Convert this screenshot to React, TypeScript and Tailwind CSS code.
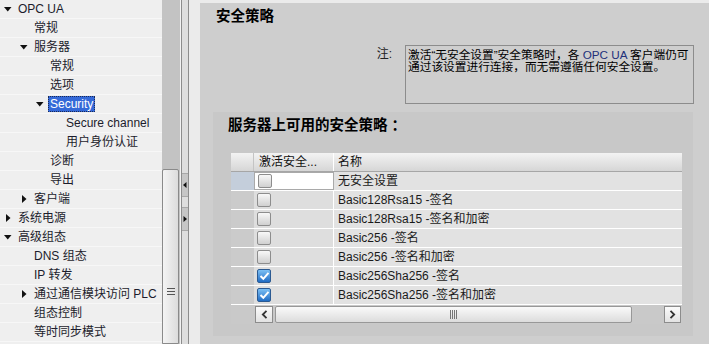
import React from "react";

type Item = { l: number; a?: "down" | "right"; t: string; sel?: boolean };

const items: Item[] = [
  { l: 0, a: "down", t: "OPC UA" },
  { l: 1, t: "常规" },
  { l: 1, a: "down", t: "服务器" },
  { l: 2, t: "常规" },
  { l: 2, t: "选项" },
  { l: 2, a: "down", t: "Security", sel: true },
  { l: 3, t: "Secure channel" },
  { l: 3, t: "用户身份认证" },
  { l: 2, t: "诊断" },
  { l: 2, t: "导出" },
  { l: 1, a: "right", t: "客户端" },
  { l: 0, a: "right", t: "系统电源" },
  { l: 0, a: "down", t: "高级组态" },
  { l: 1, t: "DNS 组态" },
  { l: 1, t: "IP 转发" },
  { l: 1, a: "right", t: "通过通信模块访问 PLC" },
  { l: 1, t: "组态控制" },
  { l: 1, t: "等时同步模式" },
];

const pad = ["pl-[4px]", "pl-[20px]", "pl-[36px]", "pl-[52px]"];

function Arrow({ a }: { a?: "down" | "right" }) {
  if (a === "down")
    return (
      <svg width="8" height="5" viewBox="0 0 8 5" className="block">
        <path d="M0 0 L7.5 0 L3.75 4.5 Z" fill="#111" />
      </svg>
    );
  if (a === "right")
    return (
      <svg width="5" height="8" viewBox="0 0 5 8" className="block ml-[2px]">
        <path d="M0 0 L4.5 4 L0 8 Z" fill="#111" />
      </svg>
    );
  return null;
}

function Tree() {
  return (
    <div className="w-[162px] h-full bg-[#efefef] flex flex-col">
      {items.map((it, i) => (
        <div
          key={i}
          className={`h-[19px] shrink-0 flex items-center border-b border-[#f7f7f7] ${pad[it.l]}`}
        >
          <div className="w-[14px] flex items-center">
            <Arrow a={it.a} />
          </div>
          {it.sel ? (
            <span className="ml-[-2px] px-[1px] h-[16px] leading-[14px] bg-[#3469d8] text-white border border-dotted border-[#1b2a55] whitespace-nowrap">
              {it.t}
            </span>
          ) : (
            <span className="whitespace-nowrap text-[#1c1c2c]">{it.t}</span>
          )}
        </div>
      ))}
    </div>
  );
}

function VScroll() {
  return (
    <div className="w-[18px] h-full flex flex-col bg-[#c3c3c3]">
      <div className="h-[169px] shrink-0" />
      <div className="flex-1 border border-[#8a8a8a] rounded-t-[2px] mr-[1px] bg-linear-to-r from-[#f4f4f4] to-[#dcdcdc] flex flex-col items-center">
        <div className="mt-[118px] flex flex-col gap-[2px]">
          <div className="w-[8px] h-[1px] bg-[#555]" />
          <div className="w-[8px] h-[1px] bg-[#555]" />
          <div className="w-[8px] h-[1px] bg-[#555]" />
        </div>
      </div>
    </div>
  );
}

function Splitter() {
  return (
    <div className="w-[9px] h-full flex bg-[#e9e9e9]">
      <div className="w-[1px] bg-[#f2f2f2]" />
      <div className="w-[1px] bg-[#8c8c8c]" />
      <div className="flex-1 bg-[#dedede] flex flex-col">
        <div className="h-[173px] shrink-0" />
        <div className="h-[24px] shrink-0 bg-[#c6c6c6] border-y border-[#a8a8a8] flex items-center justify-center">
          <svg width="4" height="6" viewBox="0 0 4 6">
            <path d="M3.5 0 L0 3 L3.5 6 Z" fill="#111" />
          </svg>
        </div>
        <div className="h-[10px] shrink-0" />
        <div className="h-[24px] shrink-0 bg-[#c6c6c6] border-y border-[#a8a8a8] flex items-center justify-center">
          <svg width="4" height="6" viewBox="0 0 4 6">
            <path d="M0.5 0 L4 3 L0.5 6 Z" fill="#111" />
          </svg>
        </div>
      </div>
      <div className="w-[1px] bg-[#8c8c8c]" />
    </div>
  );
}

function Checkbox({ checked }: { checked?: boolean }) {
  if (checked)
    return (
      <div className="w-[14px] h-[14px] rounded-[2px] border border-[#2b5a92] bg-linear-to-b from-[#7cc0f4] to-[#1f6cc4] flex items-center justify-center">
        <svg width="11" height="10" viewBox="0 0 11 10">
          <path d="M1.5 5 L4.3 7.8 L9.5 1.8" stroke="#fff" strokeWidth="2" fill="none" />
        </svg>
      </div>
    );
  return (
    <div className="w-[14px] h-[14px] rounded-[2px] border border-[#8d8d8d] bg-linear-to-b from-[#f8f8f8] to-[#d0d0d0]" />
  );
}

const rows = [
  { n: "无安全设置", c: false },
  { n: "Basic128Rsa15 -签名", c: false },
  { n: "Basic128Rsa15 -签名和加密", c: false },
  { n: "Basic256 -签名", c: false },
  { n: "Basic256 -签名和加密", c: false },
  { n: "Basic256Sha256 -签名", c: true },
  { n: "Basic256Sha256 -签名和加密", c: true },
];

function Table() {
  return (
    <div className="ml-[18px] mr-[11px] flex flex-col">
      <div className="h-[19px] flex border-b border-[#a6a6a6] bg-linear-to-b from-[#f3f3f3] to-[#d6d6d6]">
        <div className="w-[23px] border-r border-[#c4c4c4]" />
        <div className="w-[80px] border-r border-[#ffffff] pl-[5px] flex items-center whitespace-nowrap">
          激活安全...
        </div>
        <div className="flex-1 pl-[4px] flex items-center">名称</div>
      </div>
      {rows.map((r, i) => (
        <div key={i} className="h-[19px] flex border-b border-white">
          <div className={`w-[23px] ${i === 0 ? "bg-[#c4cedb]" : "bg-[#cbcbcb]"}`} />
          <div
            className={`w-[80px] flex items-center pl-[3px] ${
              i === 0 ? "bg-white border border-[#a9a9a9]" : "bg-[#dedede] border-r border-white"
            }`}
          >
            <Checkbox checked={r.c} />
          </div>
          <div className="flex-1 bg-[#e2e2e2] pl-[4px] flex items-center whitespace-nowrap text-[#1a1a1a]">
            {r.n}
          </div>
        </div>
      ))}
      <div className="h-[19px] flex bg-[#c9c9c9] pt-[1px]">
        <div className="w-[24px]" />
        <div className="w-[18px] h-[17px] border border-[#8c8c8c] bg-linear-to-b from-[#fbfbfb] to-[#e2e2e2] flex items-center justify-center">
          <svg width="7" height="9" viewBox="0 0 7 9">
            <path d="M5.5 0.8 L1.8 4.5 L5.5 8.2" stroke="#333" strokeWidth="1.8" fill="none" />
          </svg>
        </div>
        <div className="w-[2px]" />
        <div className="w-[357px] h-[17px] border border-[#989898] rounded-[2px] bg-linear-to-b from-[#fafafa] to-[#dcdcdc] flex items-center justify-center">
          <div className="flex gap-[1px]">
            <div className="w-[1px] h-[9px] bg-[#777]" />
            <div className="w-[1px] h-[9px] bg-[#777]" />
            <div className="w-[1px] h-[9px] bg-[#777]" />
            <div className="w-[1px] h-[9px] bg-[#777]" />
          </div>
        </div>
        <div className="flex-1" />
        <div className="w-[17px] h-[17px] border border-[#8c8c8c] bg-linear-to-b from-[#fbfbfb] to-[#e2e2e2] flex items-center justify-center">
          <svg width="7" height="9" viewBox="0 0 7 9">
            <path d="M1.5 0.8 L5.2 4.5 L1.5 8.2" stroke="#333" strokeWidth="1.8" fill="none" />
          </svg>
        </div>
        <div className="w-[1px]" />
      </div>
    </div>
  );
}

export default function App() {
  return (
    <div className="w-[709px] h-[344px] overflow-hidden flex text-[12px] leading-[19px] font-['Liberation_Sans','Noto_Sans_CJK_SC',sans-serif] text-[#111]">
      <Tree />
      <VScroll />
      <Splitter />
      <div className="flex-1 h-full bg-[#ebebeb] pl-[11px] pt-[3px]">
        <div className="h-full bg-[#cecece] flex flex-col">
          <div className="h-[27px] leading-[27px] pl-[16px] text-[14.5px] font-bold text-black">
            安全策略
          </div>
          <div className="mt-[15px] flex justify-end pr-[15px]">
            <div className="pt-[3px] leading-[12px] mr-[13px] text-[#222]">注:</div>
            <div className="w-[289px] h-[59px] border border-[#8c8c8c] px-[2px] pt-[3px] text-[11.7px] leading-[12px] text-black whitespace-nowrap">
              <div>
                激活“无安全设置”安全策略时，各 <span className="text-[#22307a]">OPC UA</span> 客户端仍可
              </div>
              <div>通过该设置进行连接，而无需遵循任何安全设置。</div>
            </div>
          </div>
          <div className="mt-[8px] ml-[13px] mr-[16px] h-[224px] bg-[#c8c8c8] flex flex-col">
            <div className="h-[26px] leading-[26px] pl-[15px] text-[14.5px] font-bold text-black">
              服务器上可用的安全策略 ：
            </div>
            <div className="mt-[15px]">
              <Table />
            </div>
          </div>
        </div>
      </div>
    </div>
  );
}
